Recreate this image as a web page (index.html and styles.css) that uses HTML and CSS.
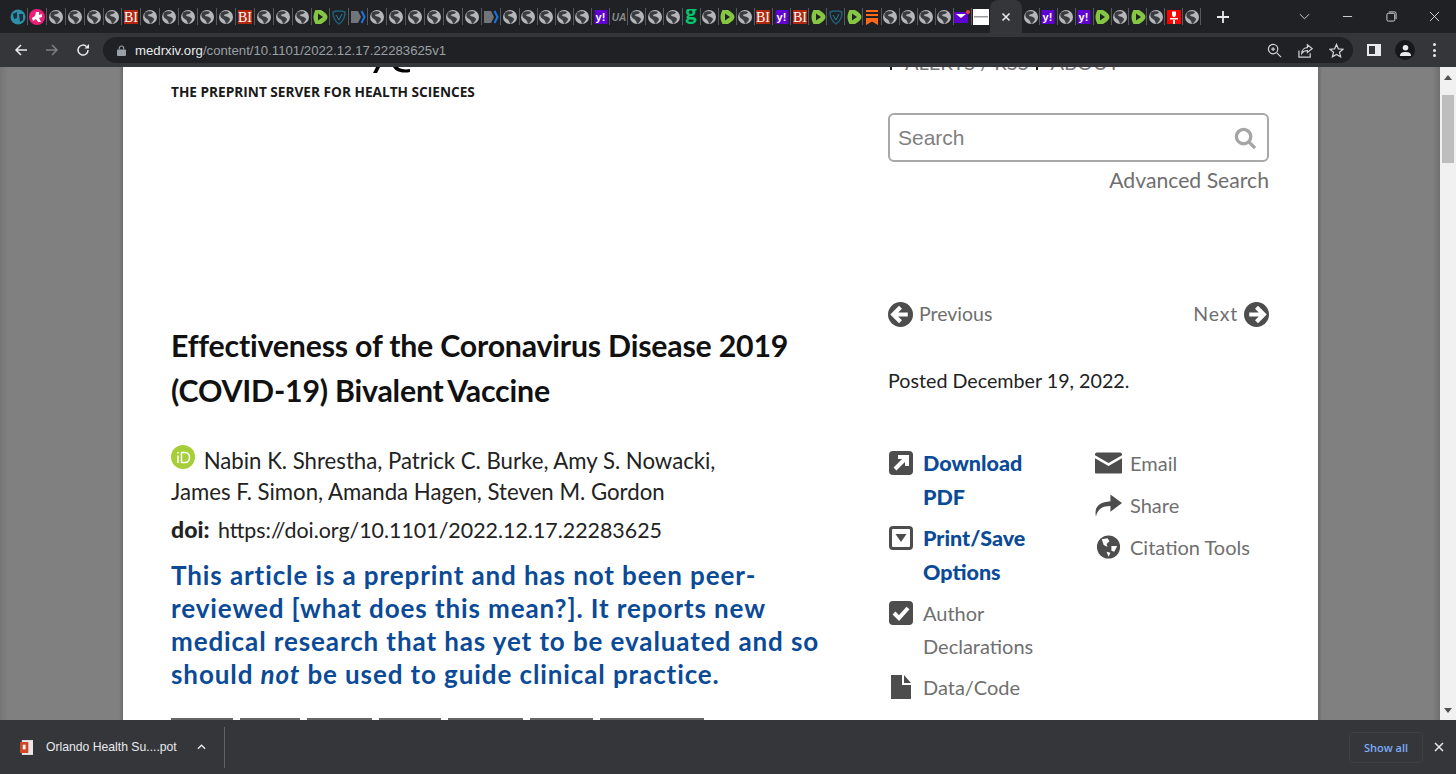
FILE: index.html
```html
<!DOCTYPE html>
<html lang="en">
<head>
  <meta charset="UTF-8">
  <title>Effectiveness of the Coronavirus Disease 2019 (COVID-19) Bivalent Vaccine | medRxiv</title>
  <link rel="stylesheet" href="styles.css">
</head>
<body>
  <svg class="sprites" width="0" height="0">
    <symbol id="g" viewBox="0 0 16 16">
      <circle cx="8" cy="8" r="7" fill="#b4b6b9"/>
      <path d="M3 3.500C6 1.500 10 2 11 3.500 9.500 5 8 5 6.500 5.500 5.500 6.500 6.500 7.500 8.500 7.500 10.500 8 12 9 12 10.500 11 12.500 9.500 14 8 15 7.500 13 7 11 5 10 3 9 1.500 7 3 3.500Z" fill="#3a3c40"/>
    </symbol>
    <symbol id="bi" viewBox="0 0 16 16">
      <rect x="1" y="1" width="14" height="14" fill="#b5260e"/>
      <text x="8" y="13" text-anchor="middle" font-family="Liberation Serif" font-size="14" fill="#fff">BI</text>
    </symbol>
    <symbol id="rumble" viewBox="0 0 16 16">
      <path d="M3.500 1H9C13 3 15.500 6 15.500 8S13 13 9 15H3.500C2 12 1.500 10 1.500 8S2 4 3.500 1Z" fill="#85c742"/>
      <path d="M6 4.500L11 8 6 11.500Z" fill="#202124"/>
    </symbol>
    <symbol id="shield" viewBox="0 0 16 16">
      <path d="M2 3C5 1.500 11 1.500 14 3 14 9 11 13 8 15 5 13 2 9 2 3Z" fill="none" stroke="#1f5f7a" stroke-width="1.500"/>
      <path d="M5 6L8 11 11 5" fill="none" stroke="#2b7f9e"/>
    </symbol>
    <symbol id="tag" viewBox="0 0 16 16">
      <path d="M1 2H8L11 8 8 14H1Z" fill="#70757a"/>
      <path d="M11.500 2L14.500 8 11.500 14" fill="none" stroke="#1a73e8" stroke-width="2"/>
    </symbol>
    <symbol id="yahoo" viewBox="0 0 16 16">
      <rect x="1.500" y="1" width="13" height="14" fill="#5f01d1"/>
      <text x="7.500" y="12" text-anchor="middle" font-family="Liberation Sans" font-weight="700" font-size="11" fill="#fff">y!</text>
    </symbol>
    <symbol id="ua" viewBox="0 0 16 16">
      <text x="8" y="12" text-anchor="middle" font-family="Liberation Sans" font-style="italic" font-weight="700" font-size="10" fill="#8a8a8a">UA</text>
    </symbol>
    <symbol id="gg" viewBox="0 0 16 16">
      <text x="8" y="11" text-anchor="middle" font-family="Lato" font-weight="900" font-size="22" fill="#05c46b">g</text>
    </symbol>
    <symbol id="substack" viewBox="0 0 16 16">
      <path d="M2 1H14V3H2ZM2 5H14V7H2ZM2 9H14V16L8 12.500 2 16Z" fill="#ff6719"/>
    </symbol>
    <symbol id="ymail" viewBox="0 0 16 16">
      <rect y="3" width="14" height="11" fill="#5f01d1"/>
      <path d="M2 5H12L7 9Z" fill="#fff"/>
      <circle cx="14" cy="3" r="2" fill="#ea4335"/>
    </symbol>
    <symbol id="page" viewBox="0 0 16 16">
      <rect width="16" height="16" fill="#fff"/>
      <rect x="1" y="7" width="14" height="1.500" fill="#999"/>
    </symbol>
    <symbol id="torch" viewBox="0 0 16 16">
      <rect x="1" y="1" width="14" height="14" fill="#f00"/>
      <path d="M6 2.500H10V6L9 8H7L6 6ZM4 9H12V10.500H4ZM7 11H9V15H7Z" fill="#fff"/>
    </symbol>
  </svg>

  <div class="window">
    <div class="tabstrip">
      <div class="tabs tabs-wide">
        <span class="tab"><svg class="fav" viewBox="0 0 16 16"><circle cx="8" cy="8" r="7.500" fill="#2f8fa8"/><path d="M3 5L7 3V9L4 10ZM9 5H13V11L10 13Z" fill="#17303a"/></svg></span>
        <span class="tab"><svg class="fav" viewBox="0 0 16 16"><circle cx="8" cy="8" r="8" fill="#ee1e78"/><path d="M7 3H10V6L13 5V8L10 9 12 13H9L7 10 4 12 3 9 6 7Z" fill="#fff"/></svg></span>
        <span class="tab"><svg class="fav"><use href="#g"/></svg></span>
        <span class="tab"><svg class="fav"><use href="#g"/></svg></span>
        <span class="tab"><svg class="fav"><use href="#g"/></svg></span>
        <span class="tab"><svg class="fav"><use href="#g"/></svg></span>
        <span class="tab"><svg class="fav"><use href="#bi"/></svg></span>
        <span class="tab"><svg class="fav"><use href="#g"/></svg></span>
        <span class="tab"><svg class="fav"><use href="#g"/></svg></span>
        <span class="tab"><svg class="fav"><use href="#g"/></svg></span>
        <span class="tab"><svg class="fav"><use href="#g"/></svg></span>
        <span class="tab"><svg class="fav"><use href="#g"/></svg></span>
        <span class="tab"><svg class="fav"><use href="#bi"/></svg></span>
        <span class="tab"><svg class="fav"><use href="#g"/></svg></span>
        <span class="tab"><svg class="fav"><use href="#g"/></svg></span>
        <span class="tab"><svg class="fav"><use href="#g"/></svg></span>
        <span class="tab"><svg class="fav"><use href="#rumble"/></svg></span>
        <span class="tab"><svg class="fav"><use href="#shield"/></svg></span>
        <span class="tab"><svg class="fav"><use href="#tag"/></svg></span>
        <span class="tab"><svg class="fav"><use href="#g"/></svg></span>
        <span class="tab"><svg class="fav"><use href="#g"/></svg></span>
        <span class="tab"><svg class="fav"><use href="#g"/></svg></span>
        <span class="tab"><svg class="fav"><use href="#g"/></svg></span>
        <span class="tab"><svg class="fav"><use href="#g"/></svg></span>
        <span class="tab"><svg class="fav"><use href="#g"/></svg></span>
        <span class="tab"><svg class="fav"><use href="#tag"/></svg></span>
      </div>
      <div class="tabs tabs-narrow">
        <span class="tab"><svg class="fav"><use href="#g"/></svg></span>
        <span class="tab"><svg class="fav"><use href="#g"/></svg></span>
        <span class="tab"><svg class="fav"><use href="#g"/></svg></span>
        <span class="tab"><svg class="fav"><use href="#g"/></svg></span>
        <span class="tab"><svg class="fav"><use href="#g"/></svg></span>
        <span class="tab"><svg class="fav"><use href="#yahoo"/></svg></span>
        <span class="tab"><svg class="fav"><use href="#ua"/></svg></span>
        <span class="tab"><svg class="fav"><use href="#g"/></svg></span>
        <span class="tab"><svg class="fav"><use href="#g"/></svg></span>
        <span class="tab"><svg class="fav"><use href="#g"/></svg></span>
        <span class="tab"><svg class="fav"><use href="#gg"/></svg></span>
        <span class="tab"><svg class="fav"><use href="#g"/></svg></span>
        <span class="tab"><svg class="fav"><use href="#rumble"/></svg></span>
        <span class="tab"><svg class="fav"><use href="#g"/></svg></span>
        <span class="tab"><svg class="fav"><use href="#bi"/></svg></span>
        <span class="tab"><svg class="fav"><use href="#yahoo"/></svg></span>
        <span class="tab"><svg class="fav"><use href="#bi"/></svg></span>
        <span class="tab"><svg class="fav"><use href="#rumble"/></svg></span>
        <span class="tab"><svg class="fav"><use href="#shield"/></svg></span>
        <span class="tab"><svg class="fav"><use href="#rumble"/></svg></span>
        <span class="tab"><svg class="fav"><use href="#substack"/></svg></span>
        <span class="tab"><svg class="fav"><use href="#g"/></svg></span>
        <span class="tab"><svg class="fav"><use href="#g"/></svg></span>
        <span class="tab"><svg class="fav"><use href="#g"/></svg></span>
        <span class="tab"><svg class="fav"><use href="#g"/></svg></span>
        <span class="tab"><svg class="fav"><use href="#ymail"/></svg></span>
        <span class="tab tab-last"><svg class="fav"><use href="#page"/></svg></span>
      </div>
      <div class="tab-active">
        <svg class="close-x" viewBox="0 0 10 10"><path d="M1.500 1.500L8.500 8.500M8.500 1.500L1.500 8.500"/></svg>
      </div>
      <div class="tabs tabs-rest">
        <span class="tab"><svg class="fav"><use href="#g"/></svg></span>
        <span class="tab"><svg class="fav"><use href="#yahoo"/></svg></span>
        <span class="tab"><svg class="fav"><use href="#g"/></svg></span>
        <span class="tab"><svg class="fav"><use href="#yahoo"/></svg></span>
        <span class="tab"><svg class="fav"><use href="#rumble"/></svg></span>
        <span class="tab"><svg class="fav"><use href="#g"/></svg></span>
        <span class="tab"><svg class="fav"><use href="#rumble"/></svg></span>
        <span class="tab"><svg class="fav"><use href="#g"/></svg></span>
        <span class="tab"><svg class="fav"><use href="#torch"/></svg></span>
        <span class="tab"><svg class="fav"><use href="#g"/></svg></span>
      </div>
      <svg class="new-tab" viewBox="0 0 12 12"><path d="M6 0V12M0 6H12"/></svg>
      <div class="win-controls">
        <svg class="win-icon" viewBox="0 0 12 12"><path d="M1 3.500L6 8.500 11 3.500"/></svg>
        <svg class="win-icon" viewBox="0 0 12 12"><path d="M1 6H11"/></svg>
        <svg class="win-icon" viewBox="0 0 12 12"><rect x="1" y="2.500" width="8.500" height="8.500" rx="1.500"/><path d="M3 1H9.500Q11 1 11 2.500V9"/></svg>
        <svg class="win-icon" viewBox="0 0 12 12"><path d="M1 1L11 11M11 1L1 11"/></svg>
      </div>
    </div>

    <div class="toolbar">
      <svg class="nav-icon" viewBox="0 0 14 14"><path d="M13 7H2M7 2L2 7 7 12"/></svg>
      <svg class="nav-icon nav-off" viewBox="0 0 14 14"><path d="M1 7H12M7 2L12 7 7 12"/></svg>
      <svg class="nav-icon nav-last" viewBox="0 0 14 14"><path d="M12 7A5 5 0 1 1 10.500 3.500"/><path class="solid" d="M13 1V5.500H8.500Z"/></svg>
      <div class="omnibox">
        <svg class="lock" viewBox="0 0 10 12"><path d="M2.500 5V3.500A2.500 2.500 0 0 1 7.500 3.500V5" fill="none" stroke="#9aa0a6" stroke-width="1.200"/><rect y="5" width="10" height="7" rx="1" fill="#9aa0a6"/></svg>
        <span class="url"><span class="url-host">medrxiv.org</span>/content/10.1101/2022.12.17.22283625v1</span>
        <div class="omni-actions">
          <svg class="omni-icon" viewBox="0 0 16 16"><circle cx="6.500" cy="6.500" r="5"/><path d="M10.500 10.500L15 15M4.500 6.500H8.500M6.500 4.500V8.500"/></svg>
          <svg class="omni-icon" viewBox="0 0 16 16"><path d="M1 8V15H13V11"/><path d="M4 11C4 7 7 5 10 5V2L15 6 10 10V8C8 8 5.500 8.500 4 11Z"/></svg>
          <svg class="omni-icon" viewBox="0 0 16 16"><path d="M8 1.500L10 6.200 15 6.600 11.200 9.900 12.400 14.800 8 12.200 3.600 14.800 4.800 9.900 1 6.600 6 6.200Z"/></svg>
        </div>
      </div>
      <svg class="panel-icon" viewBox="0 0 14 14"><path fill-rule="evenodd" d="M0 1H14V13H0ZM2 3V11H8V3Z"/></svg>
      <span class="avatar"><svg viewBox="0 0 14 14"><circle cx="7" cy="4" r="3"/><path d="M1 13C1 9 4 8.500 7 8.500S13 9 13 13Z"/></svg></span>
      <span class="kebab"><i></i><i></i><i></i></span>
    </div>

    <div class="viewport">
      <div class="gutter"></div>
      <div class="article-page">
        <div class="masthead">
          <div class="brand">
            <svg class="logo-tail" viewBox="0 0 37 6"><path d="M0 6L3 0H7L4 6ZM20 0H25C27 2 32 3 37 2V5C30 6.500 23 5 20 0Z"/></svg>
            <div class="tagline">THE PREPRINT SERVER FOR HEALTH SCIENCES</div>
          </div>
          <div class="top-links">
            <span class="top-link">ALERTS / RSS</span>
            <span class="top-link">ABOUT</span>
          </div>
        </div>

        <div class="search-row">
          <div class="search-col">
            <div class="search-box">
              <span class="search-ph">Search</span>
              <svg class="search-glass" viewBox="0 0 24 24"><circle cx="10" cy="10" r="7.500"/><path d="M15.500 15.500L22 22"/></svg>
            </div>
            <a class="advanced">Advanced Search</a>
          </div>
        </div>

        <div class="content">
          <div class="main-col">
            <h1 class="title">Effectiveness of the Coronavirus Disease 2019 (COVID-19) Bivalent&#8201;Vaccine</h1>
            <div class="authors">
              <svg class="orcid" viewBox="0 0 24 24"><circle cx="12" cy="12" r="12" fill="#a6ce39"/><path d="M7 7V8.500M7 10.500V18" stroke="#fff" stroke-width="1.500" fill="none"/><path d="M10.500 7.500V17.500H14C20 17.500 20 7.500 14 7.500Z" fill="none" stroke="#fff" stroke-width="1.500"/></svg>
              Nabin K. Shrestha, Patrick C. Burke, Amy S. Nowacki,<br>James F. Simon, Amanda Hagen, Steven M. Gordon
            </div>
            <div class="doi"><strong>doi:</strong> https://doi.org/10.1101/2022.12.17.22283625</div>
            <p class="notice">This article is a preprint and has not been peer-reviewed [what does this mean?]. It reports new medical research that has yet to be evaluated and so should <em>not</em> be used to guide clinical practice.</p>
          </div>

          <div class="side-col">
            <div class="pager">
              <span class="pager-link">
                <svg class="pager-icon" viewBox="0 0 24 24"><circle cx="12" cy="12" r="12"/><path class="arrow" d="M19 12H6M12 5L5 12 12 19"/></svg>
                Previous
              </span>
              <span class="pager-link pager-next">
                Next
                <svg class="pager-icon" viewBox="0 0 24 24"><circle cx="12" cy="12" r="12"/><path class="arrow" d="M5 12H18M12 5L19 12 12 19"/></svg>
              </span>
            </div>
            <div class="posted">Posted December 19, 2022.</div>
            <div class="tools">
              <ul class="tool-list tool-list-left">
                <li class="tool tool-strong">
                  <svg class="tool-icon" viewBox="0 0 24 24"><rect width="24" height="24" rx="4" fill="#4d4d4d"/><path d="M6 18L16 8M9 6H18V15" fill="none" stroke="#fff" stroke-width="4"/></svg>
                  <span>Download PDF</span>
                </li>
                <li class="tool tool-strong">
                  <svg class="tool-icon" viewBox="0 0 24 24"><rect width="24" height="24" rx="4" fill="#4d4d4d"/><rect x="3" y="3" width="18" height="18" rx="1" fill="#fff"/><path d="M6.500 8H17.500L12 16Z" fill="#4d4d4d"/></svg>
                  <span>Print/Save Options</span>
                </li>
                <li class="tool">
                  <svg class="tool-icon" viewBox="0 0 24 24"><rect width="24" height="24" rx="4" fill="#4d4d4d"/><path d="M5 12L10 17 19 7" fill="none" stroke="#fff" stroke-width="4"/></svg>
                  <span>Author Declarations</span>
                </li>
                <li class="tool">
                  <svg class="tool-icon" viewBox="0 0 24 24"><path d="M2 0H13V10H22V24H2ZM15 0L22 8H15Z" fill="#4d4d4d"/></svg>
                  <span>Data/Code</span>
                </li>
              </ul>
              <ul class="tool-list">
                <li class="tool tool-wide">
                  <svg class="tool-icon tool-icon-wide" viewBox="0 0 28 24"><path d="M2 1H26Q28 1 28 3V4L14 12 0 4V3Q0 1 2 1ZM0 7L14 15 28 7V22Q28 23 26 23H2Q0 23 0 22Z" fill="#4d4d4d"/></svg>
                  <span>Email</span>
                </li>
                <li class="tool tool-wide">
                  <svg class="tool-icon tool-icon-wide" viewBox="0 0 28 24"><path d="M1 24C-1 15 3 9 16 8V1L28 10 16 19V13C9 13 3 15 1 24Z" fill="#4d4d4d"/></svg>
                  <span>Share</span>
                </li>
                <li class="tool tool-wide">
                  <svg class="tool-icon tool-icon-wide" viewBox="0 0 28 24"><circle cx="14" cy="12" r="12" fill="#4d4d4d"/><path d="M7 4L13 3 15 6 12 9 13 12 9 10ZM17 11L23 11 20 17 17 16ZM12 17L16 18 14 22Z" fill="#fff"/></svg>
                  <span>Citation Tools</span>
                </li>
              </ul>
            </div>
          </div>
        </div>

        <div class="tab-tops">
          <span class="tab-top w62"></span>
          <span class="tab-top w60"></span>
          <span class="tab-top w65"></span>
          <span class="tab-top w62"></span>
          <span class="tab-top w75"></span>
          <span class="tab-top w63"></span>
          <span class="tab-top w104"></span>
        </div>
      </div>
      <div class="gutter gutter-right"></div>
      <div class="scrollbar">
        <svg class="scroll-arrow" viewBox="0 0 8 5"><path d="M4 0L8 5H0Z"/></svg>
        <div class="scroll-thumb"></div>
        <svg class="scroll-arrow scroll-arrow-down" viewBox="0 0 8 5"><path d="M4 5L8 0H0Z"/></svg>
      </div>
    </div>

    <div class="download-bar">
      <svg class="ppt-icon" viewBox="0 0 14 16"><rect x="2" width="12" height="16" fill="#e8e8e8"/><rect y="2" width="9" height="12" rx="1" fill="#d24726"/><rect x="3" y="5" width="3" height="5" fill="#fff"/></svg>
      <span class="download-name">Orlando Health Su....pot</span>
      <svg class="download-caret" viewBox="0 0 10 6"><path d="M1 5L5 1 9 5"/></svg>
      <span class="download-sep"></span>
      <span class="show-all">Show all</span>
      <svg class="download-close" viewBox="0 0 10 10"><path d="M1 1L9 9M9 1L1 9"/></svg>
    </div>
  </div>
</body>
</html>
```

FILE: styles.css
```css
html, body {
  margin: 0;
  height: 100%;
  overflow: hidden;
}

body {
  font-family: Lato, "Open Sans", sans-serif;
  background-color: #202124;
}

.sprites {
  display: block;
  height: 0;
}

.window {
  display: flex;
  flex-direction: column;
  height: 774px;
}

/* tab strip */
.tabstrip {
  display: flex;
  align-items: center;
  height: 33px;
  padding-left: 9px;
  background-color: #202124;
  flex-shrink: 0;
}

.tabs {
  display: flex;
  align-items: center;
}

.tab {
  display: flex;
  align-items: center;
  justify-content: center;
  height: 17px;
  border-right: 1px solid #55585c;
  box-sizing: border-box;
}

.tabs-wide .tab {
  width: 18.92px;
}

.tabs-narrow {
  margin-left: 1px;
}

.tabs-narrow .tab {
  width: 18.1px;
}

.tabs-rest .tab {
  width: 17.9px;
}

.tab-last {
  border-right: none;
}

.fav {
  width: 16px;
  height: 16px;
  display: block;
}

.tab-active {
  display: flex;
  align-items: center;
  justify-content: center;
  width: 32px;
  height: 33px;
  background-color: #35363a;
  border-radius: 8px 8px 0 0;
}

.close-x {
  width: 10px;
  height: 10px;
  fill: none;
  stroke: #e8eaed;
  stroke-width: 1.6;
}

.new-tab {
  width: 12px;
  height: 12px;
  margin-left: 16px;
  fill: none;
  stroke: #e8eaed;
  stroke-width: 1.800;
}

.win-controls {
  display: flex;
  align-items: center;
  gap: 32.5px;
  margin-left: auto;
  padding-right: 16px;
}

.win-icon {
  width: 11px;
  height: 11px;
  fill: none;
  stroke: #dadce0;
  stroke-width: 1;
}

/* toolbar */
.toolbar {
  display: flex;
  align-items: center;
  height: 34px;
  padding-left: 14px;
  background-color: #35363a;
  flex-shrink: 0;
}

.nav-icon {
  width: 14px;
  height: 14px;
  margin-right: 17px;
  fill: none;
  stroke: #e8eaed;
  stroke-width: 1.500;
}

.nav-icon .solid {
  fill: #e8eaed;
  stroke: none;
}

.nav-off {
  stroke: #7c7f84;
}

.nav-last {
  margin-right: 13px;
}

.omnibox {
  display: flex;
  align-items: center;
  width: 1250px;
  height: 26px;
  padding-left: 14px;
  box-sizing: border-box;
  border-radius: 13px;
  background-color: #202124;
}

.lock {
  width: 9px;
  height: 11px;
  margin-right: 9px;
}

.url {
  font-family: "Liberation Sans", Arial, sans-serif;
  font-size: 13.2px;
  color: #9aa0a6;
  white-space: nowrap;
}

.url-host {
  color: #e8eaed;
}

.omni-actions {
  display: flex;
  align-items: center;
  gap: 16px;
  margin-left: auto;
  padding-right: 9px;
}

.omni-icon {
  width: 15px;
  height: 15px;
  fill: none;
  stroke: #cfd1d4;
  stroke-width: 1.300;
}

.panel-icon {
  width: 14px;
  height: 14px;
  margin-left: 14px;
  fill: #e8eaed;
}

.avatar {
  display: flex;
  align-items: center;
  justify-content: center;
  width: 20px;
  height: 20px;
  margin-left: 14px;
  border-radius: 50%;
  background-color: #17181a;
}

.avatar svg {
  width: 13px;
  height: 13px;
  fill: #e8eaed;
}

.kebab {
  display: flex;
  flex-direction: column;
  gap: 2.500px;
  margin-left: 18px;
}

.kebab i {
  display: block;
  width: 3px;
  height: 3px;
  border-radius: 50%;
  background-color: #e8eaed;
}

/* page */
.viewport {
  display: flex;
  flex: 1;
  min-height: 0;
  overflow: hidden;
  background-color: #808080;
}

.gutter {
  width: 123px;
  background: linear-gradient(to right, #757575, #808080 8px, #808080 calc(100% - 4px), #6a6a6a);
}

.gutter-right {
  width: 122px;
  background: linear-gradient(to right, #6a6a6a, #808080 4px, #808080 calc(100% - 8px), #6f6f6f);
}

.scrollbar {
  position: relative;
  width: 16px;
  background-color: #f1f1f1;
}

.scroll-arrow {
  position: absolute;
  top: 8px;
  left: 4px;
  width: 8px;
  height: 5px;
  fill: #505050;
}

.scroll-arrow-down {
  top: auto;
  bottom: 7px;
}

.scroll-thumb {
  position: absolute;
  top: 28px;
  left: 2px;
  width: 12px;
  height: 68px;
  background-color: #bdbdbd;
}

.article-page {
  display: flex;
  flex-direction: column;
  width: 1195px;
  padding: 0 49px 0 48px;
  box-sizing: border-box;
  background-color: #fff;
}

.masthead {
  display: flex;
  justify-content: space-between;
  height: 32px;
}

.brand {
  width: 400px;
}

.logo-tail {
  display: block;
  width: 37px;
  height: 6px;
  margin-left: 202px;
}

.tagline {
  margin-top: 11px;
  font-family: "Open Sans", sans-serif;
  font-size: 13.65px;
  font-weight: 700;
  line-height: 16px;
  color: #1a1a1a;
  white-space: nowrap;
}

.top-links {
  display: flex;
  align-self: flex-start;
  width: 379px;
  height: 5px;
  overflow: hidden;
}

.top-link {
  height: 16px;
  margin-top: -13px;
  padding: 0 7px 0 13px;
  border-left: 2px solid #222;
  font-size: 20px;
  line-height: 16px;
  color: #777;
  white-space: nowrap;
}

.search-row {
  display: flex;
  justify-content: flex-end;
  margin-top: 14px;
}

.search-col {
  display: flex;
  flex-direction: column;
  width: 381px;
}

.search-box {
  display: flex;
  align-items: center;
  justify-content: space-between;
  height: 49px;
  padding: 0 10px 0 8px;
  box-sizing: border-box;
  border: 2px solid #a8a8a8;
  border-radius: 6px;
}

.search-ph {
  font-family: "Liberation Sans", Arial, sans-serif;
  font-size: 21px;
  color: #7f7f7f;
}

.search-glass {
  width: 23px;
  height: 23px;
  margin-top: 2px;
  fill: none;
  stroke: #a5a5a5;
  stroke-width: 3.500;
}

.advanced {
  margin-top: 4px;
  font-size: 21.2px;
  line-height: 28px;
  color: #6f6f6f;
  text-align: right;
}

.content {
  display: flex;
  justify-content: space-between;
  flex: 1;
  min-height: 0;
}

.main-col {
  width: 660px;
  padding-top: 129px;
}

.title {
  margin: 0;
  font-size: 30.3px;
  font-weight: 700;
  line-height: 45px;
  color: #111;
  letter-spacing: -0.2px;
}

.authors {
  margin-top: 32px;
  font-size: 22.2px;
  line-height: 31px;
  color: #222;
}

.orcid {
  width: 24px;
  height: 24px;
  margin-right: 3px;
  vertical-align: 0;
}

.doi {
  margin-top: 7px;
  font-size: 21.4px;
  line-height: 30px;
  color: #222;
}

.doi strong {
  margin-right: 3px;
  font-size: 23px;
  font-weight: 900;
}

.notice {
  margin: 14px 0 0;
  width: 650px;
  font-size: 26px;
  font-weight: 700;
  line-height: 33px;
  letter-spacing: 0.9px;
  color: #0b4a96;
}

.side-col {
  width: 381px;
  padding-top: 107px;
}

.pager {
  display: flex;
  justify-content: space-between;
}

.pager-link {
  display: flex;
  align-items: center;
  gap: 6px;
  font-size: 19.5px;
  line-height: 26px;
  color: #6f6f6f;
}

.pager-next {
  letter-spacing: 0.8px;
}

.pager-icon {
  width: 25px;
  height: 25px;
  fill: #4d4d4d;
}

.pager-icon .arrow {
  fill: none;
  stroke: #fff;
  stroke-width: 4;
}

.posted {
  margin-top: 41px;
  font-size: 19.7px;
  line-height: 26px;
  color: #222;
}

.tools {
  display: flex;
  margin-top: 53px;
}

.tool-list {
  margin: 0;
  padding: 0;
  list-style: none;
}

.tool-list-left {
  width: 207px;
}

.tool {
  display: flex;
  align-items: flex-start;
  width: 160px;
  margin-bottom: 8px;
  font-size: 20px;
  line-height: 33px;
  color: #6f6f6f;
}

.tool-strong {
  font-size: 21.5px;
  font-weight: 900;
  line-height: 33.500px;
  color: #0b4a96;
}

.tool-wide {
  width: 174px;
  margin-bottom: 9px;
}

.tool-icon {
  flex-shrink: 0;
  width: 24px;
  height: 24px;
  margin: 4px 10px 0 1px;
}

.tool-icon-wide {
  width: 27px;
  margin-right: 8px;
  margin-left: 0;
}

.tab-tops {
  display: flex;
  gap: 7px;
  flex-shrink: 0;
}

.tab-top {
  display: block;
  height: 2px;
  background-color: #666;
}

.w62 { width: 62px; }
.w60 { width: 60px; }
.w65 { width: 65px; }
.w63 { width: 63px; }
.w75 { width: 75px; }
.w104 { width: 104px; }

/* download shelf */
.download-bar {
  display: flex;
  align-items: center;
  height: 54px;
  padding: 0 12px 0 20px;
  background-color: #35363a;
  box-sizing: border-box;
  flex-shrink: 0;
}

.ppt-icon {
  width: 13px;
  height: 15px;
}

.download-name {
  margin-left: 13px;
  font-family: "Liberation Sans", Arial, sans-serif;
  font-size: 12.2px;
  color: #e8eaed;
  white-space: nowrap;
}

.download-caret {
  width: 9px;
  height: 6px;
  margin-left: 20px;
  fill: none;
  stroke: #e8eaed;
  stroke-width: 1.500;
}

.download-sep {
  width: 1px;
  height: 41px;
  margin-left: 18px;
  background-color: #5f6368;
}

.show-all {
  display: flex;
  align-items: center;
  justify-content: center;
  width: 74px;
  height: 31px;
  margin-left: auto;
  box-sizing: border-box;
  border: 1px solid #3f4044;
  border-radius: 4px;
  font-family: "Open Sans", sans-serif;
  font-size: 11px;
  font-weight: 600;
  color: #7cacf8;
}

.download-close {
  width: 10px;
  height: 10px;
  margin-left: 11px;
  fill: none;
  stroke: #e8eaed;
  stroke-width: 1.500;
}
```
